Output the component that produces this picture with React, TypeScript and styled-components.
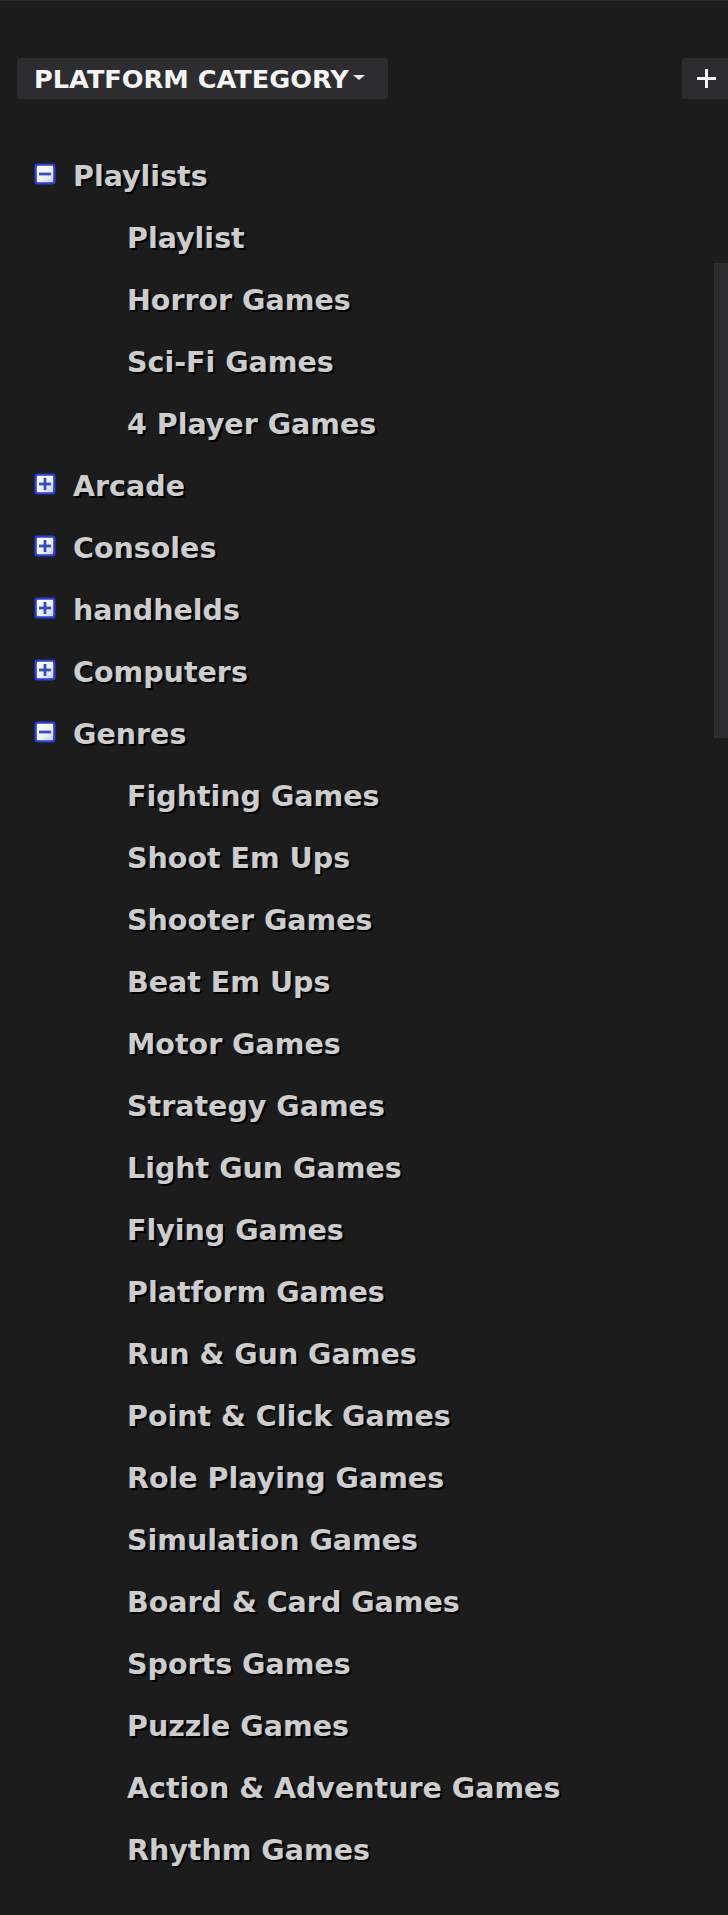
import React from "react";
import styled, { createGlobalStyle } from "styled-components";

const Global = createGlobalStyle`
  html, body {
    margin: 0;
    padding: 0;
    background: #1c1c1c;
  }
  body {
    width: 728px;
    height: 1915px;
    overflow: hidden;
    font-family: "DejaVu Sans", Verdana, sans-serif;
  }
`;

const Page = styled.div`
  position: relative;
  width: 728px;
  height: 1915px;
  box-sizing: border-box;
  border-top: 1px solid #2b2b2b;
  background: #1c1c1c;
  overflow: hidden;
`;

const Header = styled.div`
  display: flex;
  justify-content: space-between;
  align-items: center;
  padding: 57px 0 0 17px;
`;

const CategoryButton = styled.div`
  display: flex;
  align-items: center;
  gap: 4px;
  box-sizing: border-box;
  width: 371px;
  height: 41px;
  padding-left: 17px;
  background: #2d2d30;
  border-radius: 3px;
  color: #f4f4f4;
  font-family: "DejaVu Sans", Verdana, sans-serif;
  font-weight: bold;
  font-size: 25.6px;
  white-space: nowrap;
`;

const Caret = styled.span`
  width: 0;
  height: 0;
  margin-top: -2px;
  border-left: 6px solid transparent;
  border-right: 6px solid transparent;
  border-top: 5px solid #e8e8e8;
`;

const AddButton = styled.div`
  display: flex;
  align-items: center;
  box-sizing: border-box;
  width: 46px;
  height: 41px;
  padding-left: 15px;
  background: #2d2d30;
  border-radius: 3px 0 0 3px;
`;

const Tree = styled.ul`
  list-style: none;
  margin: 0;
  padding: 47px 0 0 0;
`;

const Row = styled.li<{ $child?: boolean }>`
  display: flex;
  align-items: center;
  height: 62px;
  padding-left: ${(p) => (p.$child ? "127px" : "33px")};
  gap: 16px;
`;

const Label = styled.span`
  font-family: "DejaVu Sans", Verdana, sans-serif;
  font-weight: bold;
  font-size: 28.5px;
  line-height: 62px;
  color: #cdcdcd;
  text-shadow: 2px 2px 0 #000;
  white-space: nowrap;
`;

const IconWrap = styled.span`
  display: flex;
  width: 24px;
  height: 24px;
  margin-bottom: 6px;
`;

const Scrollbar = styled.div`
  position: absolute;
  right: 0;
  top: 262px;
  width: 14px;
  height: 475px;
  background: #2d2d30;
  border-left: 1px solid #333336;
  box-sizing: border-box;
`;

const ToggleIcon: React.FC<{ open: boolean }> = ({ open }) => {
  const g = open ? "gm" : "gp";
  const f = open ? "fm" : "fp";
  return (
    <svg width="24" height="24" viewBox="0 0 24 24">
      <defs>
        <linearGradient id={g} x1="0" y1="0" x2="1" y2="1">
          <stop offset="0" stopColor="#ffffff" />
          <stop offset="0.6" stopColor="#eef0fb" />
          <stop offset="1" stopColor="#c6cbef" />
        </linearGradient>
        <filter id={f} x="-20%" y="-20%" width="140%" height="140%">
          <feGaussianBlur stdDeviation="0.7" />
        </filter>
      </defs>
      <g filter={`url(#${f})`}>
        <rect x="1.5" y="1.5" width="21" height="21" rx="3" fill="#2c3fd8" />
        <rect x="3.8" y="3.8" width="16.4" height="16.4" rx="1.2" fill={`url(#${g})`} />
        <rect x="6" y="10.6" width="12" height="2.8" fill="#3550b8" />
        {!open && <rect x="10.6" y="6" width="2.8" height="12" fill="#3550b8" />}
      </g>
    </svg>
  );
};

const PlusIcon = () => (
  <svg width="19" height="19" viewBox="0 0 19 19">
    <rect x="0" y="8" width="19" height="3" fill="#f4f4f4" />
    <rect x="8" y="0" width="3" height="19" fill="#f4f4f4" />
  </svg>
);

type Node = { label: string; open?: boolean; children?: string[] };

const tree: Node[] = [
  {
    label: "Playlists",
    open: true,
    children: ["Playlist", "Horror Games", "Sci-Fi Games", "4 Player Games"],
  },
  { label: "Arcade" },
  { label: "Consoles" },
  { label: "handhelds" },
  { label: "Computers" },
  {
    label: "Genres",
    open: true,
    children: [
      "Fighting Games",
      "Shoot Em Ups",
      "Shooter Games",
      "Beat Em Ups",
      "Motor Games",
      "Strategy Games",
      "Light Gun Games",
      "Flying Games",
      "Platform Games",
      "Run & Gun Games",
      "Point & Click Games",
      "Role Playing Games",
      "Simulation Games",
      "Board & Card Games",
      "Sports Games",
      "Puzzle Games",
      "Action & Adventure Games",
      "Rhythm Games",
    ],
  },
];

export default function App() {
  return (
    <>
      <Global />
      <Page>
        <Header>
          <CategoryButton>
            PLATFORM CATEGORY
            <Caret />
          </CategoryButton>
          <AddButton>
            <PlusIcon />
          </AddButton>
        </Header>
        <Tree>
          {tree.map((n) => (
            <React.Fragment key={n.label}>
              <Row>
                <IconWrap>
                  <ToggleIcon open={!!n.open} />
                </IconWrap>
                <Label>{n.label}</Label>
              </Row>
              {n.open &&
                n.children?.map((c) => (
                  <Row key={c} $child>
                    <Label>{c}</Label>
                  </Row>
                ))}
            </React.Fragment>
          ))}
        </Tree>
        <Scrollbar />
      </Page>
    </>
  );
}
